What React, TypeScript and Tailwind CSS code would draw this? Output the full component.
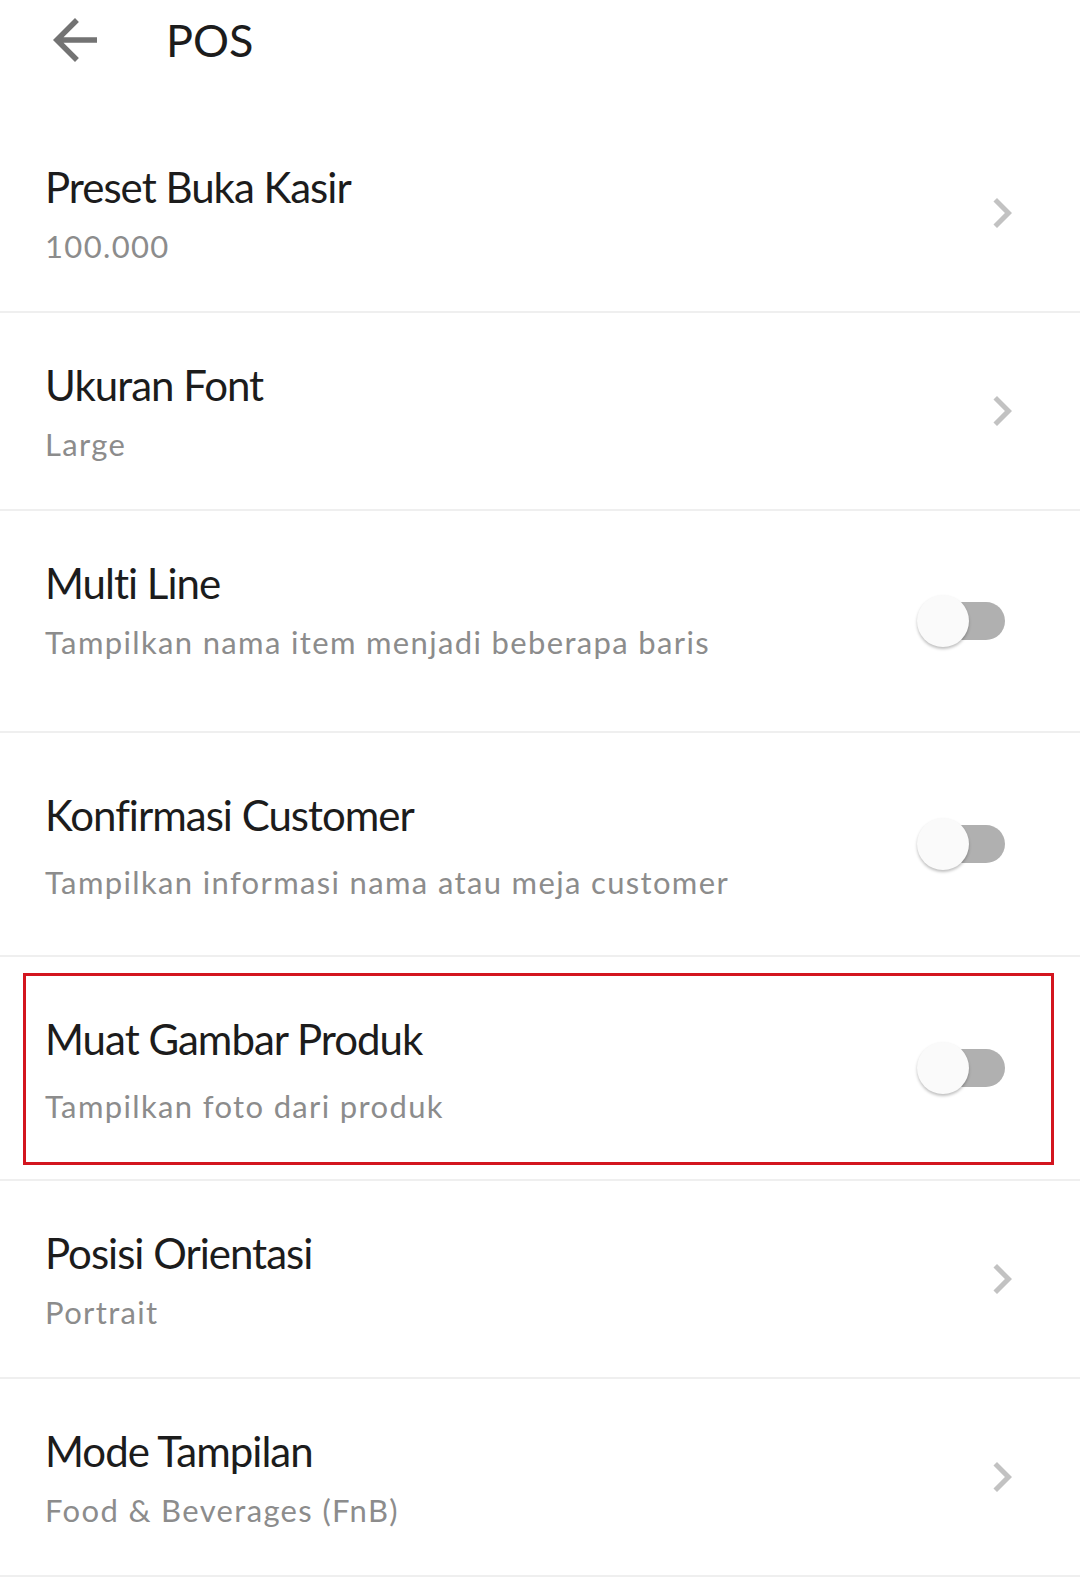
import React from 'react';

type Item =
  | { kind: 'link'; title: string; value: string }
  | { kind: 'toggle'; title: string; value: string; wide?: boolean; marked?: boolean };

const items: Item[] = [
  { kind: 'link', title: 'Preset Buka Kasir', value: '100.000' },
  { kind: 'link', title: 'Ukuran Font', value: 'Large' },
  { kind: 'toggle', title: 'Multi Line', value: 'Tampilkan nama item menjadi beberapa baris' },
  { kind: 'toggle', title: 'Konfirmasi Customer', value: 'Tampilkan informasi nama atau meja customer', wide: true },
  { kind: 'toggle', title: 'Muat Gambar Produk', value: 'Tampilkan foto dari produk', wide: true, marked: true },
  { kind: 'link', title: 'Posisi Orientasi', value: 'Portrait' },
  { kind: 'link', title: 'Mode Tampilan', value: 'Food & Beverages (FnB)' },
];

function BackArrow() {
  return (
    <svg width="66" height="66" viewBox="0 0 24 24" fill="#737373">
      <path d="M20 11H7.83l5.59-5.59L12 4l-8 8 8 8 1.41-1.41L7.83 13H20v-2z" />
    </svg>
  );
}

function Chevron() {
  return (
    <svg width="60" height="60" viewBox="0 0 24 24" fill="#c2c2c2">
      <path d="M10 6L8.59 7.41 13.17 12l-4.58 4.59L10 18l6-6z" />
    </svg>
  );
}

// switch in its "off" state: grey track, white knob on the left
function Switch() {
  return (
    <div className="relative w-[88px] h-[54px]">
      <div className="absolute right-0 top-[8px] w-[80px] h-[38px] rounded-full bg-[#b0b0b0]" />
      <div className="absolute left-0 top-px w-[52px] h-[52px] rounded-full bg-[#fafafa] shadow-[0_2px_3px_rgba(0,0,0,0.25)]" />
    </div>
  );
}

function Row({ item }: { item: Item }) {
  const wide = item.kind === 'toggle' && item.wide;
  const pad =
    item.kind === 'link' ? 'pt-[44px] pb-[44px]' : wide ? 'pt-[54px] pb-[52px]' : 'pt-[44px] pb-[68px]';

  return (
    <div className={`relative flex items-center border-b-2 border-[#efefef] pl-[45px] ${item.kind === 'link' ? 'pr-[48px]' : 'pr-[75px]'}`}>
      <div className={`flex-1 ${pad}`}>
        <div className="text-[42px] leading-[56px] tracking-[-1px] text-[#1c1c1c]">{item.title}</div>
        <div className={`text-[31px] leading-[42px] tracking-[1.35px] text-[#8c8c8c] ${wide ? 'mt-[18px]' : 'mt-[10px]'}`}>
          {item.value}
        </div>
      </div>
      {item.kind === 'link' ? <Chevron /> : <Switch />}
      {item.kind === 'toggle' && item.marked && (
        <div className="absolute left-[23px] right-[26px] top-[16px] bottom-[14px] border-[3px] border-[#d3151f] pointer-events-none" />
      )}
    </div>
  );
}

export default function App() {
  return (
    <div className="w-[1080px] h-[1590px] overflow-hidden bg-white font-['Lato','Noto_Sans',sans-serif]">
      <div className="flex items-center h-[80px] pl-[42px]">
        <BackArrow />
        <span className="ml-[58px] text-[45px] leading-[56px] text-[#1c1c1c]">POS</span>
      </div>

      <div className="mt-[35px]">
        {items.map((item) => (
          <Row key={item.title} item={item} />
        ))}
      </div>
    </div>
  );
}
